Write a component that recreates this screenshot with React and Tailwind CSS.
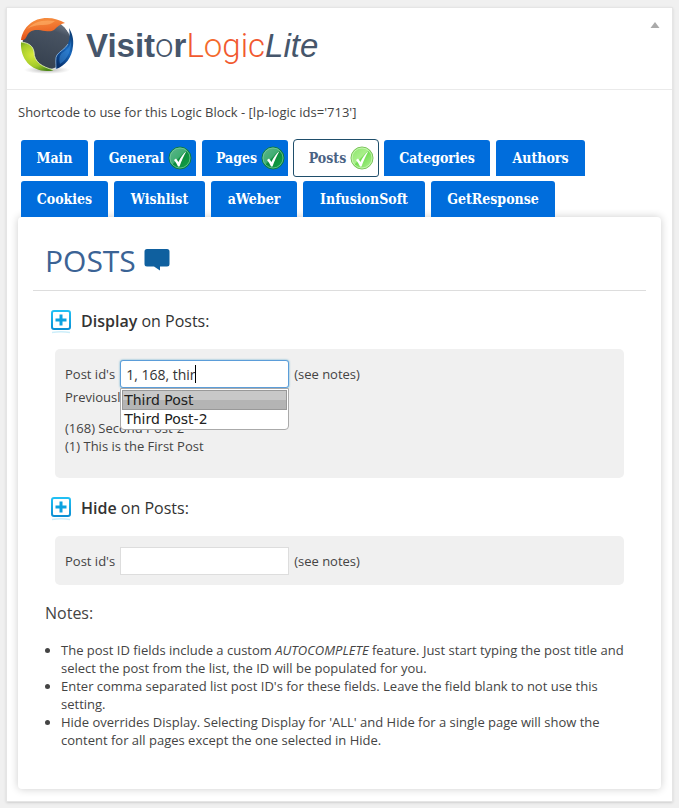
import { useState } from "react";

const tabs = [
  { name: "Main", width: "w-[67px]" },
  { name: "General", width: "w-[102px]", check: true },
  { name: "Pages", width: "w-[86px]", check: true },
  { name: "Posts", width: "w-[84px]", check: true },
  { name: "Categories", width: "w-[106px]" },
  { name: "Authors", width: "w-[89px]" },
  { name: "Cookies", width: "w-[87px]" },
  { name: "Wishlist", width: "w-[91px]" },
  { name: "aWeber", width: "w-[86px]" },
  { name: "InfusionSoft", width: "w-[122px]" },
  { name: "GetResponse", width: "w-[124px]" },
];

function LogoMark() {
  return (
    <svg width="60" height="60" viewBox="-1 2 60 60" aria-hidden="true" className="shrink-0">
      <defs>
        <linearGradient id="orange" x1="0" y1="0.2" x2="0.2" y2="1">
          <stop offset="0" stopColor="#f58a3c" />
          <stop offset="0.6" stopColor="#ee6a28" />
          <stop offset="1" stopColor="#dd4a14" />
        </linearGradient>
        <radialGradient id="green" cx="0.35" cy="0.45" r="0.65">
          <stop offset="0" stopColor="#d6e93a" />
          <stop offset="0.6" stopColor="#a3cb2a" />
          <stop offset="1" stopColor="#4f8a16" />
        </radialGradient>
        <linearGradient id="blue" x1="0.9" y1="0" x2="0.3" y2="1">
          <stop offset="0" stopColor="#0b3566" />
          <stop offset="0.5" stopColor="#1767bd" />
          <stop offset="1" stopColor="#062f6a" />
        </linearGradient>
        <linearGradient id="slate" x1="0.8" y1="0" x2="0.4" y2="1">
          <stop offset="0" stopColor="#7d8794" />
          <stop offset="0.25" stopColor="#485362" />
          <stop offset="1" stopColor="#35404e" />
        </linearGradient>
        <radialGradient id="floor">
          <stop offset="0" stopColor="#777777" stopOpacity="0.6" />
          <stop offset="1" stopColor="#999999" stopOpacity="0" />
        </radialGradient>
      </defs>
      <ellipse cx="29" cy="56" rx="23" ry="4" fill="url(#floor)" />
      <circle cx="29" cy="30.500" r="24.500" fill="url(#slate)" />
      <path d="M3 26C5 13 15 4 29 4c7 0 13 2 18 5-5 1-8 4-11 7-3 2-6 1-9 1-6-1-11-2-15 1-3 2-3 5-5 7-1 1-2 1-4 1z" fill="url(#orange)" />
      <path d="M9 15C15 8 25 5 37 7c-4 3-7 4-12 4-7 0-11 1-16 4z" fill="#ffb36b" opacity="0.6" />
      <path d="M51 14c3 5 5 11 4 18-1 12-8 20-17 23 0-6-1-11 1-14 3-4 8-6 11-11 2-5 2-11 1-16z" fill="url(#blue)" />
      <path d="M53 26c1 9-3 19-11 24-1-4-1-7 1-10 4-4 9-5 10-14z" fill="#3e8fdd" opacity="0.5" />
      <path d="M3 28c8 1 12 4 13 10 0 10 8 15 20 18-2 1-4 1-7 1C13 57 2 45 3 28z" fill="url(#green)" />
      <path d="M3 28c8 1 12 4 13 10 0 10 8 15 20 18" stroke="#eefbc4" strokeWidth="0.8" fill="none" />
      <path d="M38 55c0-6-1-11 1-14 3-4 8-6 11-11" stroke="#9fcdf8" strokeWidth="0.7" fill="none" />
      <path d="M48 9l3 5-1 4-3-5z" fill="#ffffff" />
    </svg>
  );
}

function Check({ light }) {
  return (
    <svg width="24" height="24" viewBox="0 0 24 24" aria-hidden="true" className="shrink-0">
      <defs>
        <linearGradient id={light ? "checkLight" : "checkDark"} x1="0" y1="0" x2="1" y2="1">
          <stop offset="0" stopColor={light ? "#8be46a" : "#62b58f"} />
          <stop offset="0.45" stopColor={light ? "#a9f08a" : "#3fae72"} />
          <stop offset="0.5" stopColor={light ? "#72dc52" : "#0c8a3c"} />
          <stop offset="1" stopColor={light ? "#b8f59a" : "#14a548"} />
        </linearGradient>
      </defs>
      <circle cx="12" cy="12" r="11" fill={light ? "url(#checkLight)" : "url(#checkDark)"} stroke={light ? "#7cc25c" : "#0b7a45"} />
      <circle cx="12" cy="12" r="10" fill="none" stroke={light ? "#d6fbc4" : "#7fcfa2"} strokeWidth="0.7" />
      <path d="M6 14l2-1.500 2.500 3.500c2-4.500 4.500-8 8-11-2.500 4.500-5 9.500-7 15.500h-1.500c-1-2.500-2.500-4.500-4-6.500z" fill="#ffffff" />
    </svg>
  );
}

function PlusIcon() {
  return (
    <svg width="22" height="26" viewBox="0 0 22 26" aria-hidden="true">
      <defs>
        <linearGradient id="plus" x1="0" y1="0" x2="0" y2="1">
          <stop offset="0" stopColor="#22c0f4" />
          <stop offset="1" stopColor="#0a90d4" />
        </linearGradient>
      </defs>
      <rect x="2" y="3" width="18" height="18" rx="2" fill="#ffffff" stroke="url(#plus)" strokeWidth="2" />
      <path d="M9.500 6.500h3v4h4v3h-4v4h-3v-4h-4v-3h4z" fill="#0ca2e0" />
      <path d="M2 24.500q9-1.500 18 0" stroke="#cdeefa" strokeWidth="1.500" fill="none" />
    </svg>
  );
}

function SectionTitle({ word }) {
  return (
    <h3 className="flex items-center gap-[9px] pl-[17px] text-[16px] leading-6 text-[#333]">
      <button type="button" aria-label={`Toggle ${word}`} className="h-[26px] w-[22px]">
        <PlusIcon />
      </button>
      <span>
        <span className="font-semibold">{word}</span> on Posts:
      </span>
    </h3>
  );
}

export default function App() {
  const [active, setActive] = useState("Posts");
  const [shown, setShown] = useState("1, 168, thir");
  const [hidden, setHidden] = useState("");

  return (
    <div className="min-h-screen bg-[#f0f0f0] px-[6px] py-[7px] font-['Open_Sans',sans-serif] text-[13px] leading-[18px] text-[#444]">
      <main className="border border-[#e5e5e5] bg-white pb-[12px] shadow-sm">
        <header className="flex h-[82px] items-start justify-between border-b border-[#eaeaea] pt-[8px] pr-[12px] pl-[10px]">
          <h1 className="flex items-center gap-[9px]">
            <LogoMark />
            <span className="font-['Liberation_Sans',Arial,sans-serif] text-[33px] leading-10 whitespace-nowrap text-[#46566b]">
              <b>Visit</b>
              <span className="font-['Roboto',sans-serif] font-light">o</span>
              <b>r</b>
              <span className="font-['Roboto',sans-serif] font-light text-[#f1592f]">
                L<span className="text-[#f46a2c]">o</span>gic
              </span>
              <i>Lite</i>
            </span>
          </h1>
          <button type="button" aria-label="Collapse" className="mt-[6px]">
            <svg width="10" height="6" viewBox="0 0 10 6" aria-hidden="true">
              <path d="M5 0l4.500 6h-9z" fill="#aaaaaa" />
            </svg>
          </button>
        </header>

        <div className="px-[11px] pt-[13px]">
          <p>Shortcode to use for this Logic Block - [lp-logic ids='713']</p>

          <nav className="mt-[19px] flex flex-wrap gap-x-[6px] gap-y-[5px] pl-[3px]">
            {tabs.map((tab) => (
              <button
                key={tab.name}
                type="button"
                onClick={() => setActive(tab.name)}
                className={`flex h-9 items-center justify-center gap-1 rounded-t-[3px] font-['DejaVu_Serif_Condensed','DejaVu_Serif',serif] text-[14px] font-bold whitespace-nowrap ${tab.width} ${
                  active === tab.name
                    ? "rounded-b-[2px] bg-white text-[#4a6283] outline-1 outline-[#1f4e6b]"
                    : "bg-[#006ddc] text-white"
                } ${tab.check ? "pl-[11px]" : ""}`}
              >
                {tab.name}
                {tab.check && <Check light={active === tab.name} />}
              </button>
            ))}
          </nav>

          <section className="rounded-[4px] bg-white px-[15px] pt-[24px] pb-[40px] shadow-[0_0_8px_rgba(0,0,0,0.2)]">
            <h2 className="flex items-center gap-[8px] border-b border-[#ddd] pb-[9px] pl-[12px] text-[30px] leading-10 text-[#3b6395]">
              POSTS
              <svg width="27" height="28" viewBox="0 0 27 28" aria-hidden="true">
                <path d="M3 2h20q2.500 0 2.500 2.500v12.500q0 2.500-2.500 2.500h-7v4l-6-4h-7q-2.500 0-2.500-2.500v-12.500q0-2.500 2.500-2.500z" fill="#0f609f" />
              </svg>
            </h2>

            <div className="pt-[17px]">
              <SectionTitle word="Display" />
              <div className="mx-[22px] mt-[15px] h-[129px] rounded-[5px] bg-[#f0f0f0] px-[10px] pt-[11px]">
                <div className="flex items-center gap-[5px]">
                  <label htmlFor="display-ids">Post id's</label>
                  <div className="relative">
                    <input
                      id="display-ids"
                      value={shown}
                      onChange={(e) => setShown(e.target.value)}
                      className="block h-7 w-[169px] rounded-[3px] border border-[#5b9dd9] bg-white px-[5px] text-[14px] text-[#333] shadow-[0_0_2px_rgba(30,140,190,0.8)] outline-none"
                    />
                    <span aria-hidden="true" className="pointer-events-none absolute top-[5px] left-[75px] h-[18px] w-px bg-black" />
                    <ul className="absolute top-7 left-0 w-[169px] rounded-b-[4px] border border-[#aaa] bg-white p-px font-['DejaVu_Sans',sans-serif] text-[14px] leading-[18px] text-[#222]">
                      <li className="border border-[#999] bg-linear-to-b from-[#c8c8c8] from-50% to-[#b4b4b4] to-50% px-px">
                        Third Post
                      </li>
                      <li className="px-[2px]">Third Post-2</li>
                    </ul>
                  </div>
                  <span>(see notes)</span>
                </div>
                <p>Previously selected:</p>
                <p className="mt-[13px]">(168) Second Post-2</p>
                <p>(1) This is the First Post</p>
              </div>
            </div>

            <div className="pt-[17px]">
              <SectionTitle word="Hide" />
              <div className="mx-[22px] mt-[15px] flex h-[49px] items-center gap-[5px] rounded-[5px] bg-[#f0f0f0] px-[10px]">
                <label htmlFor="hide-ids">Post id's</label>
                <input
                  id="hide-ids"
                  value={hidden}
                  onChange={(e) => setHidden(e.target.value)}
                  className="h-7 w-[169px] border border-[#ddd] bg-white px-[5px] text-[14px] outline-none"
                />
                <span>(see notes)</span>
              </div>
            </div>

            <h3 className="mt-[16px] pl-[12px] text-[16px] leading-6">Notes:</h3>
            <ul className="mt-[16px] list-disc pr-[20px] pl-[28px]">
              <li>
                The post ID fields include a custom <em>AUTOCOMPLETE</em> feature. Just start typing the post title and
                select the post from the list, the ID will be populated for you.
              </li>
              <li>Enter comma separated list post ID's for these fields. Leave the field blank to not use this setting.</li>
              <li>
                Hide overrides Display. Selecting Display for 'ALL' and Hide for a single page will show the content for
                all pages except the one selected in Hide.
              </li>
            </ul>
          </section>
        </div>
      </main>
    </div>
  );
}
